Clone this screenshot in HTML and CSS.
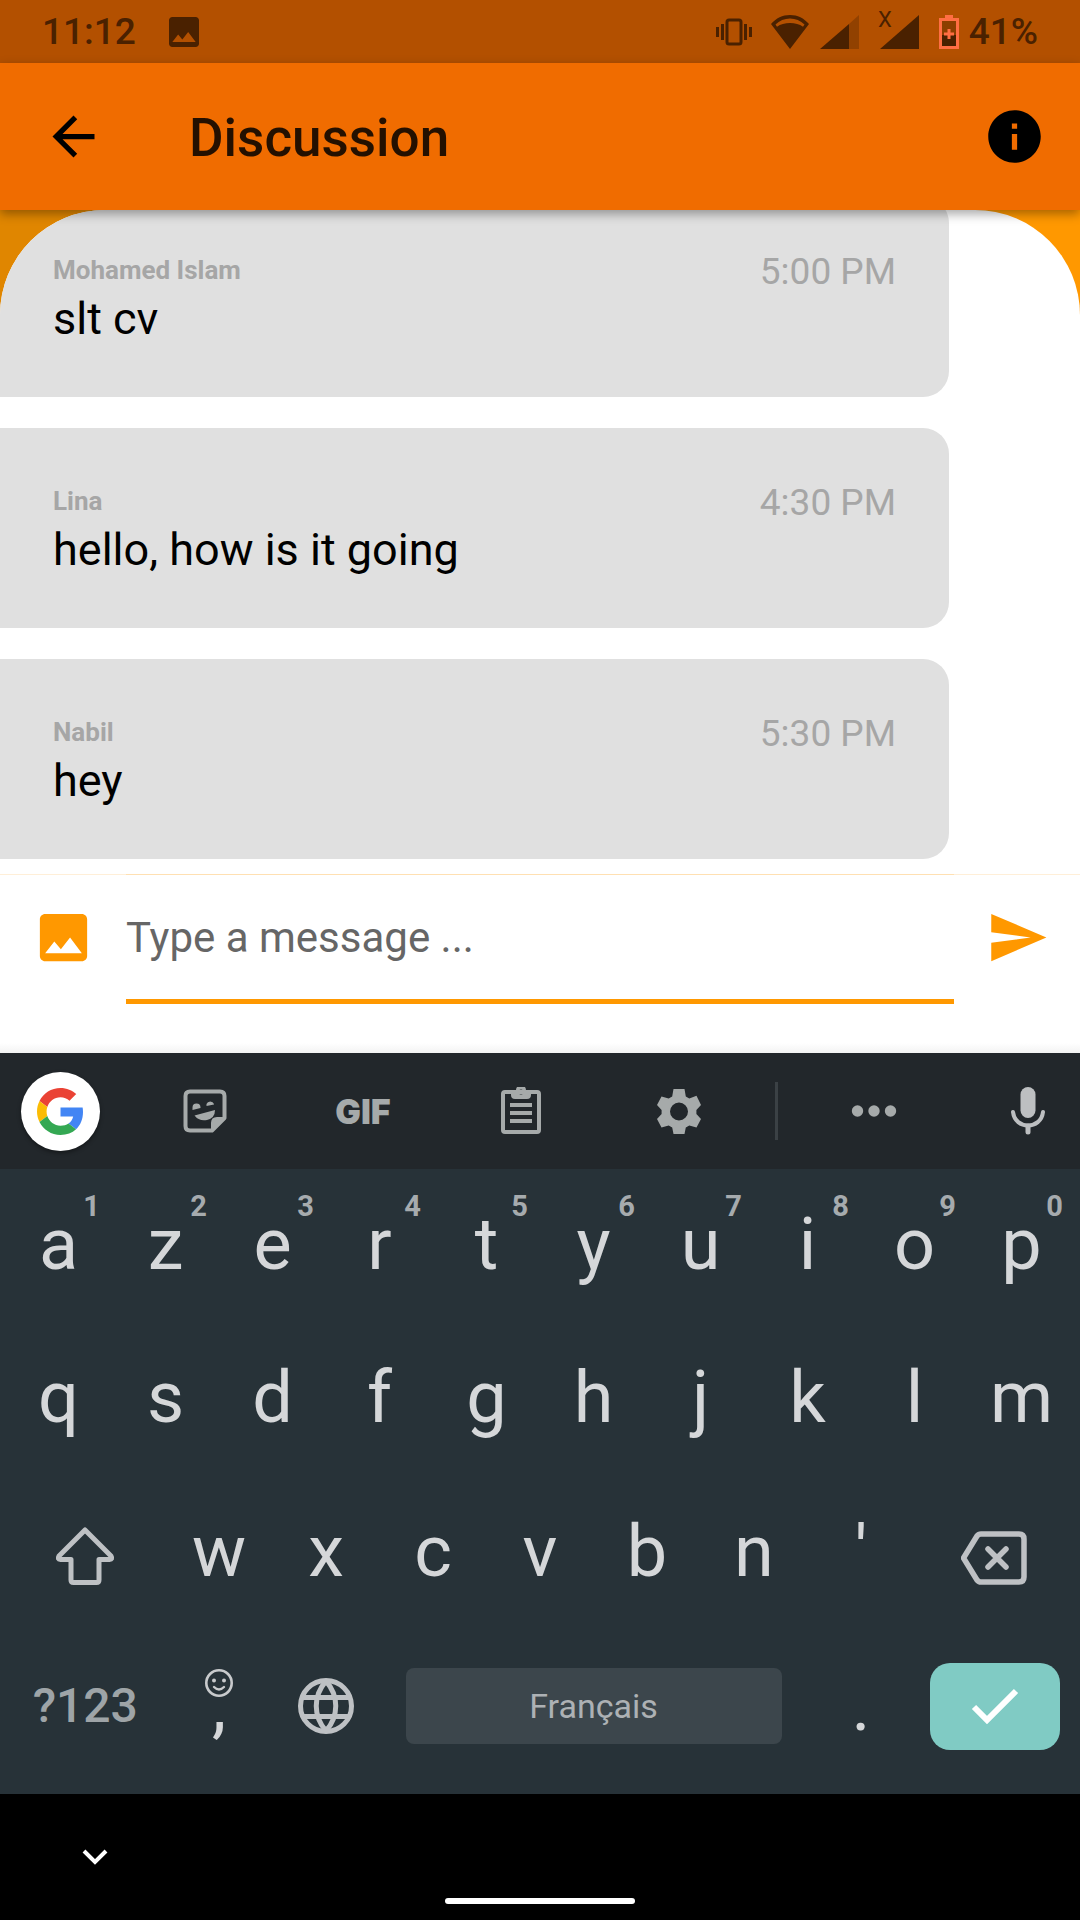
FILE: index.html
```html
<!DOCTYPE html>
<html lang="en">
<head>
<meta charset="utf-8">
<meta name="viewport" content="width=device-width, initial-scale=1">
<title>Discussion</title>
<link rel="stylesheet" href="styles.css">
</head>
<body>
<div class="screen">
  <div class="status">
    <span class="status-clock">11:12</span>
    <svg class="status-photo" viewBox="0 0 24 24"><path fill="currentColor" d="M21 19V5c0-1.100-.9-2-2-2H5c-1.100 0-2 .9-2 2v14c0 1.100.9 2 2 2h14c1.100 0 2-.9 2-2zM8.500 13.500l2.500 3.010L14.500 12l4.500 6H5l3.500-4.500z"/></svg>
    <svg class="status-vibrate" viewBox="0 0 38 28"><g fill="none" stroke="currentColor" stroke-width="3"><rect x="12" y="2" width="14" height="24" rx="2"/><path d="M2.500 9v10M7.500 6v16M35.500 9v10M30.500 6v16"/></g></svg>
    <svg class="status-wifi" viewBox="0 0 38 34"><path fill="currentColor" fill-rule="evenodd" d="M19 0C11.500 0 5 3.200 0 9l19 25L38 9C33 3.200 26.500 0 19 0zM4.500 9.500C8.500 5.500 13.500 3.400 19 3.400s10.500 2.100 14.500 6.100L32 11.700C28.500 9.300 24 8 19 8S9.500 9.300 6 11.700z"/></svg>
    <svg class="status-signal" viewBox="0 0 39 34"><path fill="currentColor" d="M0 34 29 9v25z"/><path fill="currentColor" opacity=".32" d="M29 9 39 0v34H29z"/></svg>
    <span class="status-sim">X<svg class="status-signal" viewBox="0 0 39 34"><path fill="currentColor" d="M0 34 39 0v34z"/></svg></span>
    <svg class="status-battery" viewBox="0 0 20 34"><path fill="#8c3f00" d="M2 5h16v15H2z"/><path fill="currentColor" d="M2 20h16v12H2z"/><path fill="none" stroke="#ff6e43" stroke-width="3" d="M1.500 4.500h17v28h-17z"/><path fill="#ff6e43" d="M6 0h8v4H6zM8.500 14h3v3.500H15v3h-3.500V24h-3v-3.500H5v-3h3.500z"/></svg>
    <span class="status-percent">41%</span>
  </div>

  <header class="appbar">
    <button class="icon-button" aria-label="Back"><svg class="icon" viewBox="0 0 24 24"><path fill="currentColor" d="M20 11H7.830l5.590-5.590L12 4l-8 8 8 8 1.410-1.410L7.830 13H20v-2z"/></svg></button>
    <h1 class="appbar-title">Discussion</h1>
    <button class="icon-button" aria-label="Information"><svg class="icon" viewBox="0 0 24 24"><path fill="currentColor" d="M12 2C6.480 2 2 6.480 2 12s4.480 10 10 10 10-4.480 10-10S17.520 2 12 2zm1 15h-2v-6h2v6zm0-8h-2V7h2v2z"/></svg></button>
  </header>

  <main class="thread">
    <div class="messages">
      <article class="message">
        <div class="message-body"><h2 class="message-author">Mohamed Islam</h2><p class="message-text">slt cv</p></div>
        <time class="message-time">5:00 PM</time>
      </article>
      <article class="message">
        <div class="message-body"><h2 class="message-author">Lina</h2><p class="message-text">hello, how is it going</p></div>
        <time class="message-time">4:30 PM</time>
      </article>
      <article class="message">
        <div class="message-body"><h2 class="message-author">Nabil</h2><p class="message-text">hey</p></div>
        <time class="message-time">5:30 PM</time>
      </article>
    </div>
  </main>

  <form class="composer">
    <button class="composer-button" type="button" aria-label="Attach a picture"><svg class="icon" viewBox="0 0 24 24"><path fill="currentColor" d="M21 19V5c0-1.100-.9-2-2-2H5c-1.100 0-2 .9-2 2v14c0 1.100.9 2 2 2h14c1.100 0 2-.9 2-2zM8.500 13.500l2.500 3.010L14.500 12l4.500 6H5l3.500-4.500z"/></svg></button>
    <input class="composer-input" type="text" placeholder="Type a message ..." aria-label="Message">
    <button class="composer-button" type="button" aria-label="Send"><svg class="icon" viewBox="0 0 24 24"><path fill="currentColor" d="M2.010 21 23 12 2.010 3 2 10l15 2-15 2z"/></svg></button>
  </form>

  <section class="keyboard" aria-label="Keyboard">
    <div class="toolbar">
      <button class="tool tool-google" aria-label="Google"><span class="google"><svg class="google-logo" viewBox="0 0 48 48"><path fill="#ea4335" d="M24 9.500c3.540 0 6.710 1.220 9.210 3.600l6.850-6.850C35.900 2.380 30.470 0 24 0 14.620 0 6.510 5.380 2.560 13.220l7.980 6.190C12.430 13.720 17.740 9.500 24 9.500z"/><path fill="#4285f4" d="M46.980 24.550c0-1.570-.15-3.090-.38-4.550H24v9.020h12.940c-.58 2.960-2.260 5.480-4.780 7.180l7.730 6c4.510-4.180 7.090-10.360 7.090-17.650z"/><path fill="#fbbc05" d="M10.530 28.590c-.48-1.450-.76-2.990-.76-4.590s.27-3.140.76-4.590l-7.980-6.190C.92 16.460 0 20.120 0 24c0 3.880.92 7.540 2.560 10.780l7.970-6.190z"/><path fill="#34a853" d="M24 48c6.480 0 11.930-2.130 15.890-5.810l-7.730-6c-2.150 1.450-4.920 2.300-8.160 2.300-6.260 0-11.570-4.220-13.470-9.910l-7.980 6.190C6.510 42.620 14.620 48 24 48z"/></svg></span></button>
      <button class="tool" aria-label="Stickers"><svg class="tool-icon" viewBox="0 0 48 48"><path fill="none" stroke="currentColor" stroke-width="4" stroke-linejoin="round" d="M9 4.500h30q4.500 0 4.500 4.500v22L31 43.500H9q-4.500 0-4.500-4.500V9q0-4.500 4.500-4.500z"/><path fill="currentColor" d="M30 44v-8q0-6 6-6h9zM13.500 28.500 34 23q0 8-8 10-8 1.500-12.500-4.500zM11.500 23v-2.500a4 4 0 0 1 8 0V21zM25.500 19v-2a4 4 0 0 1 7.500 0v.5z"/></svg></button>
      <button class="tool tool-gif">GIF</button>
      <button class="tool" aria-label="Clipboard"><svg class="tool-icon" viewBox="0 0 48 48"><rect x="6" y="5" width="36" height="40" rx="2" fill="none" stroke="currentColor" stroke-width="4"/><path fill="currentColor" fill-rule="evenodd" d="M14 3h5a5 5 0 0 1 10 0h5v5q0 4-4 4H18q-4 0-4-4zM24 2.500a2.500 2.500 0 1 0 0 5 2.500 2.500 0 0 0 0-5zM13 16h22v4H13zM13 24h22v4H13zM13 32h22v4H13z"/></svg></button>
      <button class="tool" aria-label="Settings"><svg class="tool-icon" viewBox="0 0 48 48"><path fill="currentColor" fill-rule="evenodd" d="M18.500 2h11l1.300 7.500 3.500 2 7.200-2.800L46 18l-4.600 5v4L46 32l-4.500 8.500-7.200-2-3.500 2-1.300 6.500h-11l-1.300-6.500-3.500-2-7.200 2L2 32l4.600-5v-4L2 18l4.500-8.500 7.200 2 3.500-2zM24 15.500a9 9 0 1 0 0 18 9 9 0 0 0 0-18z"/></svg></button>
      <span class="toolbar-rule"></span>
      <button class="tool" aria-label="More"><svg class="tool-icon" viewBox="0 0 48 48"><g fill="currentColor"><circle cx="7.500" cy="24" r="5.700"/><circle cx="24" cy="24" r="5.700"/><circle cx="40.500" cy="24" r="5.700"/></g></svg></button>
      <button class="tool tool-mic" aria-label="Voice input"><svg class="tool-icon" viewBox="0 0 48 48"><rect x="16.500" y="0" width="15" height="31" rx="7.500" fill="currentColor"/><path fill="none" stroke="currentColor" stroke-width="4" stroke-linecap="round" d="M9 25c1 9 8 13.500 15 13.500S38 34 39 25"/><path stroke="currentColor" stroke-width="5" stroke-linecap="round" d="M24 39v6"/></svg></button>
    </div>

    <div class="keys keys-top">
      <button class="key">a<sup class="hint">1</sup></button>
      <button class="key">z<sup class="hint">2</sup></button>
      <button class="key">e<sup class="hint">3</sup></button>
      <button class="key">r<sup class="hint">4</sup></button>
      <button class="key">t<sup class="hint">5</sup></button>
      <button class="key">y<sup class="hint">6</sup></button>
      <button class="key">u<sup class="hint">7</sup></button>
      <button class="key">i<sup class="hint">8</sup></button>
      <button class="key">o<sup class="hint">9</sup></button>
      <button class="key">p<sup class="hint">0</sup></button>
    </div>
    <div class="keys">
      <button class="key">q</button>
      <button class="key">s</button>
      <button class="key">d</button>
      <button class="key">f</button>
      <button class="key">g</button>
      <button class="key">h</button>
      <button class="key">j</button>
      <button class="key">k</button>
      <button class="key">l</button>
      <button class="key">m</button>
    </div>
    <div class="keys">
      <button class="key key-edge key-control" aria-label="Shift"><svg class="key-icon" viewBox="0 0 60 60"><path fill="none" stroke="currentColor" stroke-width="5" stroke-linejoin="round" d="M30 4 4 30q-2 3.500 1.500 3.500H16V54q0 2.500 2.500 2.500h23q2.500 0 2.500-2.500V33.500h10.500Q58 33.500 56 30z"/></svg></button>
      <button class="key">w</button>
      <button class="key">x</button>
      <button class="key">c</button>
      <button class="key">v</button>
      <button class="key">b</button>
      <button class="key">n</button>
      <button class="key">'</button>
      <button class="key key-edge key-control" aria-label="Delete"><svg class="key-icon key-icon-wide" viewBox="0 0 68 60"><g fill="none" stroke="currentColor" stroke-width="5.500" stroke-linejoin="round" stroke-linecap="round"><path d="M20 8h38q5 0 5 5v38q0 5-5 5H20q-2.500 0-4-2L2.500 32 16 10q1.500-2 4-2z"/><path d="m27 23 18 18M45 23 27 41"/></g></svg></button>
    </div>
    <div class="keys">
      <button class="key key-edge key-symbols">?123</button>
      <button class="key" aria-label="Comma">,<svg class="emoji" viewBox="0 0 28 28"><circle cx="14" cy="14" r="12.700" fill="none" stroke="currentColor" stroke-width="2.600"/><circle cx="9" cy="11.500" r="2" fill="currentColor"/><circle cx="19" cy="11.500" r="2" fill="currentColor"/><path fill="none" stroke="currentColor" stroke-width="2.400" stroke-linecap="round" d="M9 18q5 5 10 0"/></svg></button>
      <button class="key" aria-label="Change language"><svg class="key-icon" viewBox="0 0 60 60"><g fill="none" stroke="currentColor" stroke-width="5"><circle cx="30" cy="30" r="25.500"/><path d="M6 21.500h48M6 40.500h48M30 5c-13 15-13 35 0 50M30 5c13 15 13 35 0 50"/></g></svg></button>
      <button class="key key-space"><span class="space-label">Français</span></button>
      <button class="key">.</button>
      <button class="key key-edge key-enter" aria-label="Done"><span class="enter"><svg class="enter-icon" viewBox="0 0 48 36"><path fill="none" stroke="currentColor" stroke-width="6" d="m3 19 13 13L45 3"/></svg></span></button>
    </div>
  </section>

  <nav class="navbar">
    <button class="navbar-hide" aria-label="Hide keyboard"><svg class="chevron" viewBox="0 0 26 18"><path fill="none" stroke="currentColor" stroke-width="4" d="m2 3 11 11L24 3"/></svg></button>
    <span class="navbar-home"></span>
  </nav>
</div>
</body>
</html>
```

FILE: styles.css
```css
* {
  box-sizing: border-box;
}

body,
h1,
h2,
p {
  margin: 0;
}

body {
  font-family: Roboto, "Liberation Sans", sans-serif;
  background: #000;
}

button {
  display: flex;
  align-items: center;
  justify-content: center;
  margin: 0;
  padding: 0;
  border: 0;
  background: none;
  color: inherit;
  font: inherit;
}

svg {
  display: block;
  flex: none;
}

.screen {
  display: flex;
  flex-direction: column;
  height: 100vh;
}

/* System status bar */
.status {
  display: flex;
  align-items: center;
  flex: none;
  height: 63px;
  padding: 0 42px;
  background: #b35000;
  color: #4a2100;
  font-size: 37px;
  font-weight: 500;
  line-height: 66px;
}

.status-photo {
  width: 40px;
  height: 40px;
  margin: 0 auto 0 28px;
}

.status-vibrate {
  width: 38px;
  height: 28px;
  margin-right: 18px;
}

.status-wifi {
  width: 38px;
  height: 34px;
  margin-right: 11px;
}

.status-signal {
  width: 39px;
  height: 34px;
}

.status-sim {
  display: flex;
  align-items: flex-start;
  height: 34px;
  margin: 0 20px 0 19px;
  font-size: 22px;
  font-weight: 400;
  line-height: 10px;
}

.status-sim .status-signal {
  margin-left: -12px;
}

.status-battery {
  width: 20px;
  height: 34px;
  margin-right: 10px;
}

/* App bar */
.appbar {
  display: flex;
  align-items: center;
  flex: none;
  position: relative;
  z-index: 1;
  height: 147px;
  padding: 0 34px 0 42px;
  background: #f06c00;
  box-shadow: 0 4px 10px rgba(0, 0, 0, 0.35);
}

.icon {
  width: 63px;
  height: 63px;
}

.appbar-title {
  flex: 1;
  margin-left: 84px;
  padding-top: 3px;
  color: #241000;
  font-size: 53px;
  font-weight: 500;
  line-height: 62px;
}

/* Conversation */
.thread {
  display: flex;
  flex: 1;
  min-height: 0;
  background: linear-gradient(90deg, #e08600 50%, #ff9800 50%);
}

.messages {
  display: flex;
  flex: 1;
  flex-direction: column;
  justify-content: flex-end;
  gap: 31px;
  overflow: hidden;
  padding: 0 131px 15px 0;
  border-radius: 105px 105px 0 0;
  background: #fff;
}

.message {
  display: flex;
  justify-content: space-between;
  flex: none;
  min-height: 200px;
  padding: 53px 53px 50px;
  border-radius: 0 26px 26px 0;
  background: #e0e0e0;
}

.message-body {
  display: flex;
  flex-direction: column;
  gap: 8px;
  padding-top: 5px;
}

.message-author {
  color: #a6a6a6;
  font-size: 26px;
  font-weight: 700;
  line-height: 30px;
}

.message-text {
  color: #000;
  font-size: 45px;
  line-height: 52px;
}

.message-time {
  color: #a6a6a6;
  font-size: 37px;
  line-height: 44px;
}

/* Composer */
.composer {
  display: flex;
  flex: none;
  height: 179px;
  border-top: 1px solid #ffefd8;
  background: linear-gradient(#fff 168px, #f3f3f3);
  color: #ff9800;
}

.composer-button {
  width: 126px;
  height: 124px;
}

.composer-input {
  flex: 1;
  min-width: 0;
  height: 130px;
  margin-top: -1px;
  padding: 0;
  border: solid #ff9800;
  border-width: 1px 0 5px;
  border-top-color: #ffe0b2;
  outline: 0;
  background: none;
  color: #000;
  font: 42px/50px Roboto, "Liberation Sans", sans-serif;
}

.composer-input::placeholder {
  color: #666;
  opacity: 1;
}

/* Keyboard */
.keyboard {
  flex: none;
  padding-bottom: 11px;
  background: #273238;
  color: #d5d7d9;
}

.toolbar {
  display: grid;
  grid-template-columns: 126fr repeat(4, 158fr) 36fr 160fr 126fr;
  align-items: center;
  height: 116px;
  background: #22272b;
  color: #a6aaaa;
}

.tool-icon {
  width: 48px;
  height: 48px;
}

.tool-google {
  justify-content: flex-start;
  padding-left: 21px;
}

.google {
  display: flex;
  align-items: center;
  justify-content: center;
  width: 79px;
  height: 79px;
  border-radius: 50%;
  background: #fff;
  box-shadow: 0 2px 4px rgba(0, 0, 0, 0.4);
}

.google-logo {
  width: 47px;
  height: 47px;
}

.tool-gif {
  font-family: Inter, Roboto, sans-serif;
  font-size: 34px;
  font-weight: 900;
}

.toolbar-rule {
  justify-self: center;
  width: 3px;
  height: 58px;
  background: #3b4145;
}

.tool-mic {
  justify-content: flex-end;
  padding-right: 28px;
  color: #bdbfc1;
}

.keys {
  display: grid;
  grid-template-columns: repeat(20, 1fr);
  height: 154px;
  padding: 0 5px;
}

.keys-top {
  height: 152px;
}

.key {
  grid-column: span 2;
  position: relative;
  font-size: 72px;
  line-height: 84px;
}

.key-edge {
  grid-column: span 3;
}

.key-control {
  padding-top: 8px;
}

.key-icon {
  width: 60px;
  height: 60px;
  color: #bec1c4;
}

.key-icon-wide {
  width: 68px;
}

.hint {
  position: absolute;
  top: 21px;
  right: 12px;
  color: #a6abae;
  font-size: 29px;
  font-weight: 700;
  line-height: 32px;
}

.emoji {
  position: absolute;
  top: 40px;
  width: 28px;
  height: 28px;
  color: #c8cacc;
}

.key-symbols {
  color: #9ea4a7;
  font-size: 48px;
  font-weight: 500;
}

.key-space {
  grid-column: span 8;
  padding: 0 26px;
}

.space-label {
  flex: 1;
  border-radius: 8px;
  background: #3c464c;
  color: #adb1b4;
  font-size: 34px;
  line-height: 76px;
}

.key-enter {
  padding: 0 15px;
}

.enter {
  display: flex;
  flex: 1;
  align-items: center;
  justify-content: center;
  height: 87px;
  border-radius: 20px;
  background: #80cbc4;
  color: #fff;
}

.enter-icon {
  width: 48px;
  height: 36px;
}

/* System navigation */
.navbar {
  display: grid;
  grid-template-columns: 1fr auto 1fr;
  flex: none;
  height: 126px;
  background: #000;
}

.navbar-hide {
  justify-content: flex-start;
  padding-left: 82px;
  color: #fff;
}

.chevron {
  width: 26px;
  height: 18px;
}

.navbar-home {
  align-self: end;
  width: 190px;
  height: 6px;
  margin-bottom: 16px;
  border-radius: 3px;
  background: #fff;
}
```
